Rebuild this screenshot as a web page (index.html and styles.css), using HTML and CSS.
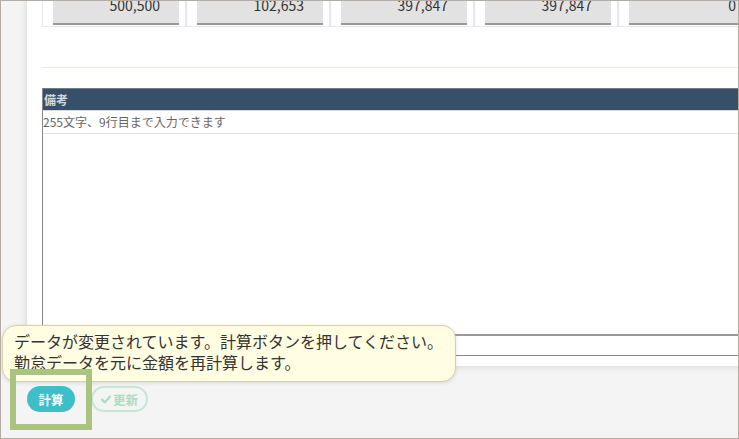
FILE: index.html
```html
<!DOCTYPE html>
<html lang="ja">
<head>
  <meta charset="UTF-8" />
  <meta name="viewport" content="width=device-width, initial-scale=1.0"/>
  <title>給与計算</title>
  <link rel="stylesheet" href="styles.css">
</head>
<body>
  <div class="frame">
    <div class="card">
      <div class="totals">
        <div class="cell"><div class="amount">500,500</div></div>
        <div class="cell"><div class="amount">102,653</div></div>
        <div class="cell"><div class="amount">397,847</div></div>
        <div class="cell"><div class="amount">397,847</div></div>
        <div class="cell"><div class="amount">0</div></div>
      </div>

      <hr class="divider">

      <div class="memo">
        <div class="memo-head">備考</div>
        <div class="memo-hint">255文字、9行目まで入力できます</div>
        <div class="memo-text"></div>
        <div class="memo-foot"></div>
      </div>
    </div>

    <div class="actions">
      <button class="btn calc">計算</button>
      <button class="btn update" disabled>
        <svg width="10" height="9" viewBox="0 0 10 9"><path d="M1 4.6 L3.8 7.4 L9 1.6" fill="none" stroke="currentColor" stroke-width="2.2" stroke-linecap="round" stroke-linejoin="round"/></svg>更新
      </button>
    </div>

    <div class="tooltip">データが変更されています。計算ボタンを押してください。<br>勤怠データを元に金額を再計算します。</div>
    <div class="highlight"></div>
  </div>
</body>
</html>
```

FILE: styles.css
```css
body {
  margin: 0;
  font-family: "Noto Sans CJK JP", "Noto Sans", sans-serif;
  color: #333;
}
.frame {
  position: relative;
  width: 739px;
  height: 439px;
  box-sizing: border-box;
  border: 1px solid #b4aba3;
  background-color: #f4f4f4;
  overflow: hidden;
}
.card {
  width: 800px;
  margin: -9px 0 0 26px;
  padding: 0 0 10px 15px;
  background-color: #fff;
  box-shadow: 0 0 8px rgba(0,0,0,0.13);
}
.totals {
  display: flex;
}
.cell {
  flex: none;
  padding: 4px 6px 1px 10px;
  border: 1px solid #e6e6f2;
}
.amount {
  width: 126px;
  box-sizing: border-box;
  padding: 0 19px 10px 0;
  line-height: 16px;
  font-size: 14px;
  text-align: right;
  background-color: #e2e2e2;
  border-bottom: 2px solid #999;
}
.divider {
  margin: 40px 0 20px 0;
  border: none;
  border-top: 1px solid #ebebe4;
}
.memo {
  border-left: 1px solid #888;
}
.memo-head {
  height: 21px;
  line-height: 21px;
  padding-left: 1px;
  border-top: 1px solid #7a7a7a;
  border-bottom: 1px solid #d8d8d8;
  background-color: #375069;
  color: #d4d8dc;
  font-size: 12px;
  font-weight: bold;
}
.memo-hint {
  height: 22px;
  line-height: 22px;
  font-size: 12px;
  color: #666;
}
.memo-text {
  height: 200px;
  border-top: 1px solid #e2e2e2;
  border-bottom: 2px solid #9a9a9a;
}
.memo-foot {
  height: 19px;
  border-bottom: 1px solid #888;
}
.actions {
  display: flex;
  gap: 16px;
  margin: 20px 0 0 26px;
}
.btn {
  height: 26px;
  border-radius: 13px;
  font-family: inherit;
  font-size: 12.5px;
  font-weight: bold;
  padding: 0;
  display: flex;
  align-items: center;
  justify-content: center;
  gap: 2px;
}
.calc {
  width: 48px;
  border: none;
  background-color: #3dbfca;
  color: #fff;
}
.update {
  width: 57px;
  border: 2px solid #c6e7d7;
  background-color: transparent;
  color: #aedbc5;
}
.tooltip {
  position: absolute;
  left: 1px;
  top: 324px;
  width: 431px;
  padding: 5px 10px 8px 11px;
  border: 1px solid #d8cfae;
  border-radius: 14px;
  background-color: #fffde2;
  box-shadow: 0 1px 4px rgba(0,0,0,0.12);
  font-size: 16px;
  line-height: 21px;
  color: #333;
}
.highlight {
  position: absolute;
  left: 9px;
  top: 368px;
  width: 70px;
  height: 49px;
  border: 6px solid #a9c47e;
}
```
